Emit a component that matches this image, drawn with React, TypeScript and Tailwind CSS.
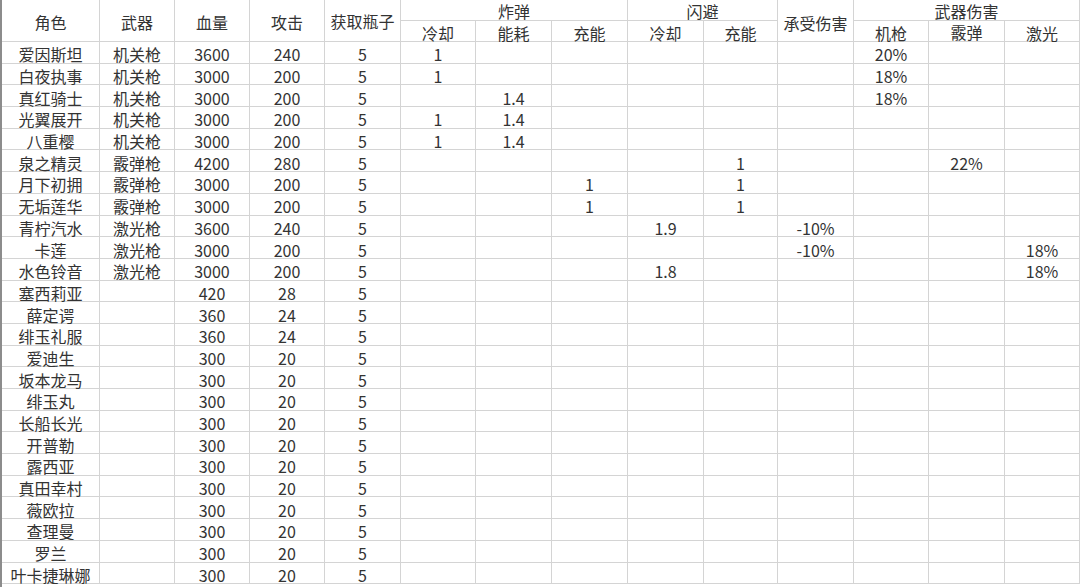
import React from "react";

const rows: string[][] = [
  ["爱因斯坦", "机关枪", "3600", "240", "5", "1", "", "", "", "", "", "20%", "", ""],
  ["白夜执事", "机关枪", "3000", "200", "5", "1", "", "", "", "", "", "18%", "", ""],
  ["真红骑士", "机关枪", "3000", "200", "5", "", "1.4", "", "", "", "", "18%", "", ""],
  ["光翼展开", "机关枪", "3000", "200", "5", "1", "1.4", "", "", "", "", "", "", ""],
  ["八重樱", "机关枪", "3000", "200", "5", "1", "1.4", "", "", "", "", "", "", ""],
  ["泉之精灵", "霰弹枪", "4200", "280", "5", "", "", "", "", "1", "", "", "22%", ""],
  ["月下初拥", "霰弹枪", "3000", "200", "5", "", "", "1", "", "1", "", "", "", ""],
  ["无垢莲华", "霰弹枪", "3000", "200", "5", "", "", "1", "", "1", "", "", "", ""],
  ["青柠汽水", "激光枪", "3600", "240", "5", "", "", "", "1.9", "", "-10%", "", "", ""],
  ["卡莲", "激光枪", "3000", "200", "5", "", "", "", "", "", "-10%", "", "", "18%"],
  ["水色铃音", "激光枪", "3000", "200", "5", "", "", "", "1.8", "", "", "", "", "18%"],
  ["塞西莉亚", "", "420", "28", "5"],
  ["薛定谔", "", "360", "24", "5"],
  ["绯玉礼服", "", "360", "24", "5"],
  ["爱迪生", "", "300", "20", "5"],
  ["坂本龙马", "", "300", "20", "5"],
  ["绯玉丸", "", "300", "20", "5"],
  ["长船长光", "", "300", "20", "5"],
  ["开普勒", "", "300", "20", "5"],
  ["露西亚", "", "300", "20", "5"],
  ["真田幸村", "", "300", "20", "5"],
  ["薇欧拉", "", "300", "20", "5"],
  ["查理曼", "", "300", "20", "5"],
  ["罗兰", "", "300", "20", "5"],
  ["叶卡捷琳娜", "", "300", "20", "5"],
];

const base =
  "flex items-center justify-center border-r border-b border-[#d4d4d4] leading-none whitespace-nowrap";
const cell = `${base} pt-[4px]`;
const top = `${base} pt-[1px]`;

export default function App() {
  return (
    <div
      className="w-[1080px] h-[587px] overflow-hidden bg-white text-[#333333] text-[16px] border-l-2 border-[#8c8c8c]"
      style={{ fontFamily: '"Noto Sans CJK SC", "Noto Sans", sans-serif' }}
    >
      <div className="grid grid-cols-[98px_75px_75px_75px_76px_75px_76px_76px_76px_74px_76px_75px_76px_75px] grid-rows-[21px_21px] auto-rows-[21.7px]">
        <div className={`${base} row-span-2 pt-[2px]`}>角色</div>
        <div className={`${base} row-span-2 pt-[2px]`}>武器</div>
        <div className={`${base} row-span-2 pt-[2px]`}>血量</div>
        <div className={`${base} row-span-2 pt-[2px]`}>攻击</div>
        <div className={`${base} row-span-2`}>获取瓶子</div>
        <div className={`${top} col-span-3`}>炸弹</div>
        <div className={`${top} col-span-2`}>闪避</div>
        <div className={`${base} row-span-2 pt-[5px]`}>承受伤害</div>
        <div className={`${top} col-span-3`}>武器伤害</div>
        <div className={cell}>冷却</div>
        <div className={cell}>能耗</div>
        <div className={cell}>充能</div>
        <div className={cell}>冷却</div>
        <div className={cell}>充能</div>
        <div className={cell}>机枪</div>
        <div className={`${base} pt-[2px]`}>霰弹</div>
        <div className={cell}>激光</div>
        {rows.map((r, i) =>
          Array.from({ length: 14 }).map((_, j) => (
            <div key={`${i}-${j}`} className={cell}>
              {r[j] ?? ""}
            </div>
          ))
        )}
      </div>
    </div>
  );
}
